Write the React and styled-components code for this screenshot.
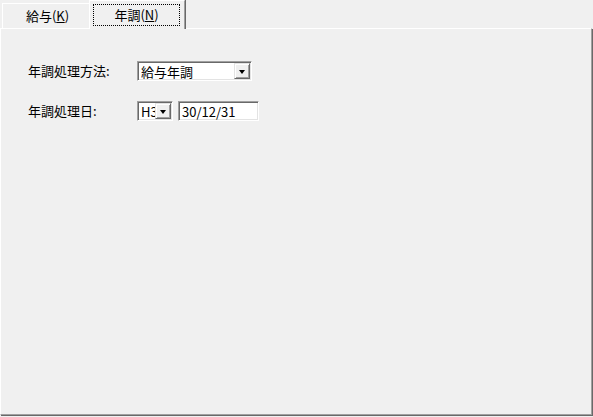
import React from 'react';
import styled, { createGlobalStyle } from 'styled-components';

const GlobalStyle = createGlobalStyle`
  html, body {
    margin: 0;
    padding: 0;
    background: #f0f0f0;
  }
  body {
    font-family: "Noto Sans CJK JP", "Liberation Sans", sans-serif;
    font-size: 13px;
    color: #000;
  }
`;

const Window = styled.div`
  width: 593px;
  height: 417px;
  display: flex;
  flex-direction: column;
  background: #f0f0f0;
`;

const TabStrip = styled.div`
  height: 28px;
  display: flex;
  align-items: flex-end;
  padding-left: 2px;
`;

const Tab = styled.div`
  box-sizing: border-box;
  position: relative;
  z-index: ${p => (p.$active ? 2 : 1)};
  width: ${p => (p.$active ? 96 : 88)}px;
  height: ${p => (p.$active ? 29 : 25)}px;
  margin-left: ${p => (p.$active ? -1 : 0)}px;
  margin-bottom: ${p => (p.$active ? -1 : 0)}px;
  padding: ${p => (p.$active ? '3px 4px 3px 3px' : '0')};
  background: #f0f0f0;
  border-top: 1px solid #fff;
  border-left: 1px solid #fff;
  border-right: 1px solid #a0a0a0;
  box-shadow: 1px 0 0 #696969;
  display: flex;
`;

const TabLabel = styled.div`
  flex: 1;
  display: flex;
  align-items: center;
  justify-content: center;
  line-height: 16px;
  padding-left: ${p => (p.$active ? 0 : 3)}px;
  border: 1px dotted ${p => (p.$active ? '#000' : 'transparent')};
`;

const Key = styled.span`
  text-decoration: underline;
  text-underline-offset: 1px;
`;

const Panel = styled.div`
  box-sizing: border-box;
  flex: 1;
  width: 592px;
  margin-bottom: 2px;
  border-top: 1px solid #fff;
  border-left: 1px solid #fff;
  border-right: 1px solid #a0a0a0;
  border-bottom: 1px solid #a0a0a0;
  box-shadow: 1px 1px 0 #696969;
  padding: 32px 0 0 27px;
  display: grid;
  grid-template-columns: 109px auto;
  grid-auto-rows: 20px;
  row-gap: 20px;
  align-content: start;
  align-items: center;
`;

const Label = styled.div`
  line-height: 20px;
`;

const Controls = styled.div`
  display: flex;
  gap: 5px;
  height: 20px;
`;

const Sunken = styled.div`
  box-sizing: border-box;
  width: ${p => p.$w}px;
  height: 20px;
  background: #fff;
  border-top: 1px solid #a0a0a0;
  border-left: 1px solid #a0a0a0;
  border-right: 1px solid #fff;
  border-bottom: 1px solid #fff;
  box-shadow: inset 1px 1px 0 #696969, inset -1px -1px 0 #e3e3e3;
  display: flex;
  align-items: center;
  padding: 0 1px 0 3px;
`;

const FieldText = styled.span`
  flex: 1;
  overflow: hidden;
  white-space: nowrap;
  line-height: 17px;
  font-size: 13px;
`;

const DropButton = styled.div`
  box-sizing: border-box;
  width: 16px;
  height: 16px;
  flex: none;
  background: #f0f0f0;
  border-top: 1px solid #e3e3e3;
  border-left: 1px solid #e3e3e3;
  border-right: 1px solid #696969;
  border-bottom: 1px solid #696969;
  box-shadow: inset 1px 1px 0 #fff, inset -1px -1px 0 #a0a0a0;
  display: flex;
  align-items: center;
  justify-content: center;
`;

const Arrow = styled.div`
  width: 0;
  height: 0;
  border-left: 3.5px solid transparent;
  border-right: 3.5px solid transparent;
  border-top: 4px solid #000;
  margin-top: 1px;
`;

const Combo = ({ width, children }) => (
  <Sunken $w={width}>
    <FieldText>{children}</FieldText>
    <DropButton><Arrow /></DropButton>
  </Sunken>
);

export default function App() {
  return (
    <>
      <GlobalStyle />
      <Window>
        <TabStrip>
          <Tab>
            <TabLabel>給与(<Key>K</Key>)</TabLabel>
          </Tab>
          <Tab $active>
            <TabLabel $active>年調(<Key>N</Key>)</TabLabel>
          </Tab>
        </TabStrip>
        <Panel>
          <Label>年調処理方法:</Label>
          <Controls>
            <Combo width={115}>給与年調</Combo>
          </Controls>
          <Label>年調処理日:</Label>
          <Controls>
            <Combo width={36}>H30</Combo>
            <Sunken $w={81}>
              <FieldText>30/12/31</FieldText>
            </Sunken>
          </Controls>
        </Panel>
      </Window>
    </>
  );
}
